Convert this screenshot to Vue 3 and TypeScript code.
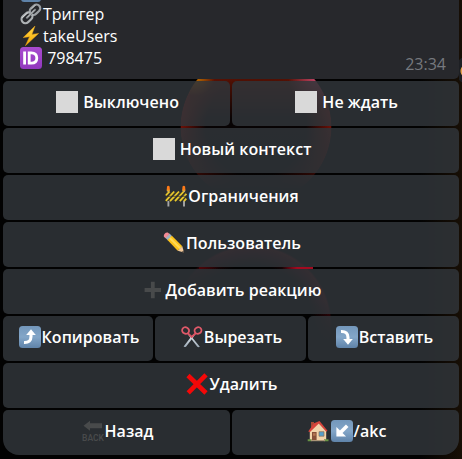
<script setup lang="ts">
interface Action {
  icons: string[]
  label: string
}

const facts: Action[] = [
  { icons: ['link'], label: 'Триггер' },
  { icons: ['bolt'], label: 'takeUsers' },
  { icons: ['id'], label: ' 798475' },
]

const rows: Action[][] = [
  [
    { icons: ['square'], label: ' Выключено' },
    { icons: ['square'], label: ' Не ждать' },
  ],
  [{ icons: ['square'], label: ' Новый контекст' }],
  [{ icons: ['barrier'], label: 'Ограничения' }],
  [{ icons: ['pencil'], label: 'Пользователь' }],
  [{ icons: ['plus'], label: 'Добавить реакцию' }],
  [
    { icons: ['up'], label: 'Копировать' },
    { icons: ['scissors'], label: 'Вырезать' },
    { icons: ['down'], label: 'Вставить' },
  ],
  [{ icons: ['cross'], label: 'Удалить' }],
  [
    { icons: ['back'], label: 'Назад' },
    { icons: ['house', 'corner'], label: '/akc' },
  ],
]
</script>

<template>
  <svg class="sprite" aria-hidden="true">
    <defs>
      <linearGradient id="tile" x1="0" y1="0" x2="0" y2="1">
        <stop offset="0" stop-color="#7397bb" />
        <stop offset=".5" stop-color="#83a6c8" />
        <stop offset="1" stop-color="#5f83a9" />
      </linearGradient>
      <linearGradient id="violet" x1="0" y1="0" x2="0" y2="1">
        <stop offset="0" stop-color="#a94bd0" />
        <stop offset="1" stop-color="#9138bd" />
      </linearGradient>
      <linearGradient id="gold" x1="0" y1="0" x2="0" y2="1">
        <stop offset="0" stop-color="#ffd84a" />
        <stop offset="1" stop-color="#f7a900" />
      </linearGradient>
      <linearGradient id="steel" x1="0" y1="0" x2="0" y2="1">
        <stop offset="0" stop-color="#e8edf1" />
        <stop offset="1" stop-color="#9eacb9" />
      </linearGradient>
    </defs>
    <symbol id="square" viewBox="0 0 22 22">
      <rect width="22" height="22" fill="#d9d9d9" />
    </symbol>
    <symbol id="link" viewBox="0 0 22 22">
      <g fill="none" stroke-linecap="round">
        <rect x="-5.8" y="-3.7" width="11.6" height="7.4" rx="3.7" transform="translate(15 6.7) rotate(-43)" stroke="#9b9fa3" stroke-width="2.2" />
        <rect x="-6" y="-3.9" width="12" height="7.8" rx="3.9" transform="translate(7 14.8) rotate(-43)" stroke="#aeb2b5" stroke-width="2.2" />
        <path d="M7 14.8L15 6.7" stroke="#74787c" stroke-width="2.3" />
        <path d="M7.3 14.3L14.5 7" stroke="#dddfe0" stroke-width=".9" />
        <path d="M2.5 14.5L7.5 10M12 5.5l3-3" stroke="#e2e4e5" stroke-width=".8" />
      </g>
    </symbol>
    <symbol id="bolt" viewBox="0 0 22 22">
      <path d="M15 1L3.2 12.6l6.3-.8L5.4 20.7 18.6 8.4l-6.7 1z" fill="url(#gold)" stroke="#e9a018" stroke-width=".5" />
    </symbol>
    <symbol id="id" viewBox="0 0 22 22">
      <rect width="22" height="22" rx="3.5" fill="url(#violet)" />
      <path d="M4.6 4.5v13M9.2 5.8v10.4h2.1c3.7 0 5.5-1.8 5.5-5.2s-1.8-5.2-5.5-5.2z" fill="none" stroke="#fff" stroke-width="2.8" />
    </symbol>
    <symbol id="barrier" viewBox="0 0 22 22">
      <path d="M3.4 5v16.5M19 5v16.5" stroke="#a6a6a6" stroke-width="1.9" />
      <path d="M1 7h20v9H1z" fill="#39352a" />
      <path d="M.8 10.5L4.5 6.5M.8 15.8L9.2 6.5M5 16.2L14 6.5M10 16.2L18.7 6.5M14.8 16.2L21.4 8.8M19 16.2l2.4-2.6" stroke="#e8c92c" stroke-width="1.8" />
      <path d="M.7 11.3h20.6" stroke="#292d31" stroke-width=".7" />
      <path d="M1.7 5.2L2 1.500Q3.300-.2 4.600 1.500L4.900 5.200zM17.200 5.200l.3-3.700q1.300-1.700 2.600 0l.3 3.700z" fill="#ff7a18" />
      <path d="M1.8 4.8h3v1.5h-3zm15.5 0h3v1.5h-3z" fill="#e8a22a" />
    </symbol>
    <symbol id="pencil" viewBox="0 0 22 22">
      <path d="M2.2 5.8l4.3-4.2 2.7 2.6L5 8.6z" fill="#9fb2bf" />
      <path d="M.8 4.4C.5 2.2 2.6.2 4.8.6L6.5 2 2.4 6.2z" fill="#f58a95" />
      <path d="M4.500 8.100l4.400-4.300 10.400 10.400-4.600 4.500z" fill="#fcc21b" />
      <path d="M6 6.700l1.500-1.400L18 15.600l-1.600 1.500z" fill="#ffda55" />
      <path d="M14.700 18.700l4.600-4.500 1.700 6.400z" fill="#f1c99b" />
      <path d="M18.800 20l1.700-1.500.7 2.400z" fill="#4a4039" />
    </symbol>
    <symbol id="plus" viewBox="0 0 22 22">
      <path d="M9.800 2.800v16.400M1.600 11h16.400" stroke="#484a4b" stroke-width="3.800" />
    </symbol>
    <symbol id="up" viewBox="0 0 22 22">
      <rect width="22" height="22" rx="3.5" fill="url(#tile)" />
      <path d="M5 16.5c4.8.2 7-1.9 7-6V7.800" fill="none" stroke="#fff" stroke-width="3.1" />
      <path d="M7.2 9L12 3.300 16.800 9z" fill="#fff" />
    </symbol>
    <symbol id="down" viewBox="0 0 22 22">
      <rect width="22" height="22" rx="3.5" fill="url(#tile)" />
      <path d="M5 5.5c4.8-.2 7 1.9 7 6v2.7" fill="none" stroke="#fff" stroke-width="3.1" />
      <path d="M7.2 13l4.8 5.7 4.800-5.700z" fill="#fff" />
    </symbol>
    <symbol id="corner" viewBox="0 0 22 22">
      <rect width="22" height="22" rx="3.5" fill="url(#tile)" />
      <path d="M16.2 5.8L9 13" stroke="#fff" stroke-width="3.6" />
      <path d="M5.4 6.9v9.7h9.7z" fill="#fff" />
    </symbol>
    <symbol id="scissors" viewBox="0 0 22 22">
      <path d="M6.2 7.2l3.6 2.6 9 11c-1.2.8-2.6.2-3.4-1.2L9.2 11.5z" fill="url(#steel)" />
      <path d="M14.8 7.2l-4 2.6L2.6 20.6c1.1.8 2.5.2 3.3-1.2l6.2-8z" fill="url(#steel)" />
      <path d="M6.5 7l4.2 4L15 7" fill="none" stroke="#d85363" stroke-width="1.9" />
      <ellipse cx="4.6" cy="4.5" rx="3.5" ry="3.2" transform="rotate(28 4.6 4.5)" fill="none" stroke="#df5969" stroke-width="1.8" />
      <ellipse cx="17" cy="4.5" rx="3.5" ry="3.2" transform="rotate(-28 17 4.5)" fill="none" stroke="#df5969" stroke-width="1.8" />
    </symbol>
    <symbol id="cross" viewBox="0 0 22 22">
      <path d="M2 2.5L20 20M20 1.8L2.2 19.800" fill="none" stroke="#f40808" stroke-width="4.6" />
    </symbol>
    <symbol id="house" viewBox="0 0 22 22">
      <path d="M4 2h3v6H4z" fill="#a94935" />
      <path d="M2.8 10.5L11.5 3l7.7 7.500v10H2.800z" fill="#f2d3ab" />
      <path d="M1.2 11.5L7 3.200 12.500 1l8 9.700-1.200 1-7.500-8.300L3 12z" fill="#d7443b" />
      <path d="M5 12h4.600v8.700H5z" fill="#874f38" />
      <path d="M6 13.200h2.600v2.500H6z" fill="#b67652" />
      <path d="M12 11.700h5v4.500h-5z" fill="#559fcc" stroke="#8e7053" stroke-width=".7" />
      <path d="M.7 19.300h4v1.900h-4zm16.300 0h4.500v1.900H17z" fill="#699345" />
      <path d="M4 20h14v1.200H4z" fill="#aa9477" />
    </symbol>
  </svg>

  <main class="chat">
    <section class="bubble">
      <i class="clipped"></i>
      <div class="facts">
        <p v-for="fact in facts" :key="fact.label" class="fact">
          <svg v-for="icon in fact.icons" :key="icon" class="emoji"><use :href="'#' + icon" /></svg>
          <span>{{ fact.label }}</span>
        </p>
      </div>
      <time class="time">23:34</time>
    </section>
    <i class="share"></i>
    <nav class="keyboard">
      <div v-for="(row, r) in rows" :key="r" class="row" :class="{ triple: row.length === 3 }">
        <button v-for="action in row" :key="action.label" class="key" type="button">
          <template v-for="icon in action.icons" :key="icon">
            <svg v-if="icon === 'back'" class="emoji" viewBox="0 0 22 22">
              <path d="M1.5 5.800L8 .8v2.500h12v5H8v2.500z" fill="#484a4b" />
              <text x="0" y="20.800" textLength="22" lengthAdjust="spacingAndGlyphs" class="tiny">BACK</text>
            </svg>
            <svg v-else class="emoji"><use :href="'#' + icon" /></svg>
          </template>
          <span>{{ action.label }}</span>
        </button>
      </div>
    </nav>
  </main>
</template>

<style>
body {
  background: #020202;
}
</style>

<style scoped>
.sprite {
  position: absolute;
  width: 0;
  height: 0;
}
.tiny {
  font: 600 9px Roboto, sans-serif;
  fill: #484a4b;
}
.chat {
  position: relative;
  box-sizing: border-box;
  width: 462px;
  height: 459px;
  padding: 0 3px;
  overflow: hidden;
  font-family: "Open Sans", "Noto Sans", sans-serif;
  font-size: 16px;
  color: #fff;
  background:
    linear-gradient(90deg, transparent 420px, rgba(38, 23, 7, .6)),
    radial-gradient(circle at 256px 127px, transparent 75px, #020202 76px) 0 0 / 100% 220px no-repeat,
    linear-gradient(transparent 115px, rgba(2, 2, 2, .65) 175px, #020202 190px) 0 0 / 100% 220px no-repeat,
    radial-gradient(circle at 195px 76px, #c87900, transparent 20px),
    radial-gradient(circle at 318px 76px, #c94970, transparent 30px),
    linear-gradient(rgba(90, 18, 4, .9), transparent) 190px 79px / 130px 40px no-repeat,
    radial-gradient(circle at 256px 127px, #080304 50px, #4c0b05 64px, #7c1309 75px, transparent 76px),
    linear-gradient(90deg, transparent, #a30a20 15px, #a30a20) 282px 267px / 31px 2px no-repeat,
    linear-gradient(90deg, #4c0508, transparent) 199px 267px / 20px 2px no-repeat,
    linear-gradient(25deg, #020202 52%, transparent 70%) 0 220px / 340px 140px no-repeat,
    linear-gradient(transparent 300px, #020202 350px),
    radial-gradient(circle at 252px 325px, transparent 60px, #45070d 78px, transparent 80px),
    #020202;
}
.bubble {
  position: relative;
  display: flex;
  justify-content: space-between;
  align-items: flex-end;
  box-sizing: border-box;
  height: 79px;
  padding: 0 13px 0 17px;
  overflow: hidden;
  border-radius: 0 0 5px 5px;
  background: #27282c;
}
.clipped {
  position: absolute;
  left: 18px;
  top: -19px;
  width: 20px;
  height: 21px;
  border-radius: 3px;
  background: #5f83a9;
}
.facts {
  padding-bottom: 10px;
}
.fact {
  display: flex;
  align-items: center;
  height: 22px;
  margin: 0;
  white-space: pre;
}
.time {
  padding-bottom: 4px;
  line-height: 22px;
  color: #76797e;
}
.share {
  position: absolute;
  left: 455px;
  top: 56px;
  width: 28px;
  height: 28px;
  border-radius: 50%;
  background: radial-gradient(circle at 12px 15px, #e6a34b 6px, #1d1f23 7px);
  clip-path: inset(0 0 0 4px);
}
.keyboard {
  display: grid;
  gap: 2px;
  padding-top: 2px;
}
.row {
  display: grid;
  grid-auto-flow: column;
  grid-auto-columns: minmax(0, 1fr);
  gap: 2px;
}
.triple {
  grid-template-columns: 150px 151px 151px;
}
.key {
  display: flex;
  align-items: center;
  justify-content: center;
  height: 45px;
  padding: 0 0 3px 1px;
  border: 0;
  border-radius: 5px;
  font: inherit;
  font-weight: 600;
  letter-spacing: .03px;
  color: #fff;
  white-space: pre;
  background: rgba(48, 53, 57, .85);
}
.row:last-child .key:first-child {
  border-bottom-left-radius: 16px;
}
.row:last-child .key:last-child {
  border-bottom-right-radius: 16px;
}
.emoji {
  flex: none;
  width: 22px;
  height: 22px;
  margin-right: 1px;
}
.key .emoji {
  margin-left: 1px;
}
</style>
